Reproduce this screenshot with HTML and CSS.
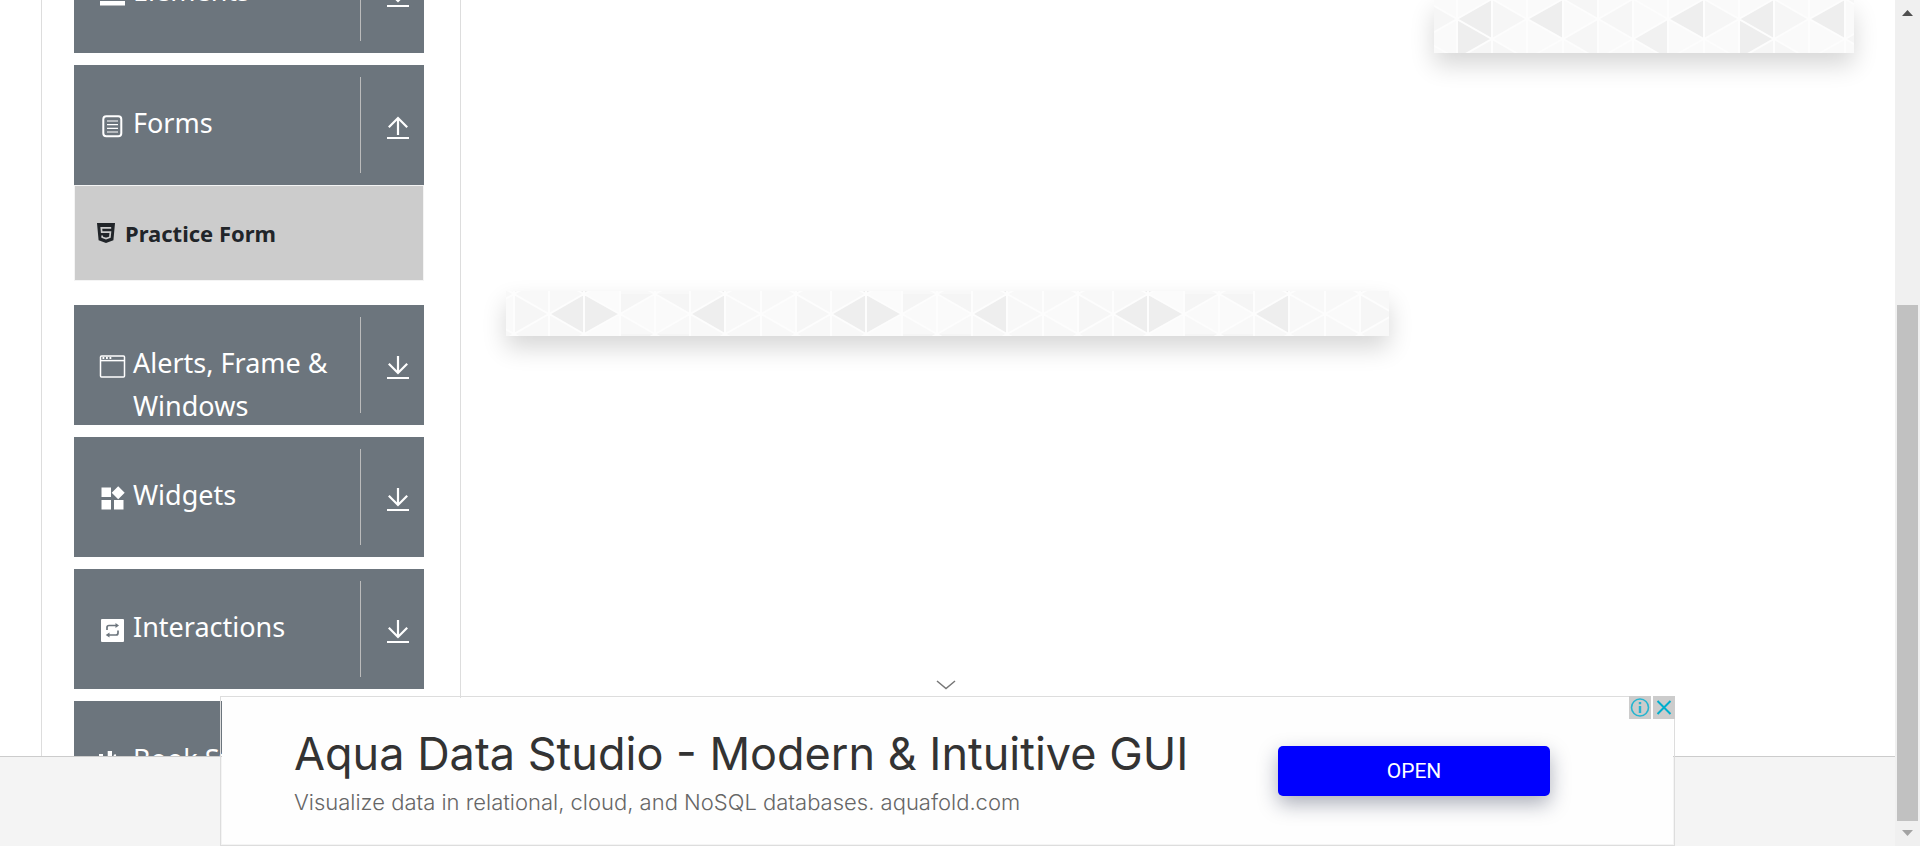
FILE: index.html
```html
<!DOCTYPE html>
<html lang="en">
<head>
<meta charset="utf-8">
<title>Practice Form</title>
<link rel="stylesheet" href="styles.css">
</head>
<body>
<svg class="defs" aria-hidden="true">
  <defs>
    <g id="arrow-down" fill="none" stroke="#fff" stroke-width="2.200"><path d="M14 4v17M4.800 11.800 14 21l9.200-9.200M3 26h22"/></g>
    <g id="arrow-up" fill="none" stroke="#fff" stroke-width="2.200"><path d="M14 23V6M4.800 15.200 14 6l9.200 9.200M3 26h22"/></g>
  </defs>
</svg>
<div class="window">
  <div class="page">
    <main class="main">
      <nav class="sidebar">
        <button class="card" type="button">
          <svg class="icon" viewBox="0 0 28 28"><path fill="#fff" d="M2 4h25v4H2zM2 12.500h25v4H2zM2 21h25v4.500H2z"/></svg>
          <span class="label">Elements</span>
          <span class="toggle"><svg class="icon" viewBox="0 0 28 28"><use href="#arrow-down"/></svg></span>
        </button>
        <div class="group">
          <button class="card" type="button">
            <svg class="icon" viewBox="0 0 28 28"><g fill="none" stroke="#fff"><rect x="5.300" y="4.300" width="18" height="20" rx="3" stroke-width="2"/><path stroke-width="1.200" d="M9 9h11M9 12.700h11M9 16.300h11M9 20h11"/></g></svg>
            <span class="label">Forms</span>
            <span class="toggle"><svg class="icon" viewBox="0 0 28 28"><use href="#arrow-up"/></svg></span>
          </button>
          <a class="subitem" href="#practice-form">
            <svg class="html5" viewBox="0 0 18 20"><path fill="#212529" d="M0 0h18l-1.600 17.200L9 20l-7.400-2.800z"/><path fill="none" stroke="#ccc" stroke-width="1.700" d="M14.200 4.800H4.300l.4 4.400h8.700l-.5 5-3.900 1.300-3.800-1.300-.1-1.700"/></svg>
            <span>Practice Form</span>
          </a>
        </div>
        <button class="card" type="button">
          <svg class="icon" viewBox="0 0 28 28"><g fill="none" stroke="#fff" stroke-width="1.500"><rect x="2.500" y="4" width="24" height="21" rx="1"/><path d="M2.500 8.600h24"/><path stroke-width="2" stroke-dasharray="1.800 1.700" d="M4.500 6h10"/></g></svg>
          <span class="label">Alerts, Frame &amp; Windows</span>
          <span class="toggle"><svg class="icon" viewBox="0 0 28 28"><use href="#arrow-down"/></svg></span>
        </button>
        <button class="card" type="button">
          <svg class="icon" viewBox="0 0 28 28"><path fill="#fff" d="M3.500 3.500H13V13H3.500zM3.500 16H13v9.500H3.500zM16 16h9.500v9.500H16zM20.200 2.200l6.500 6.500-6.500 6.500-6.500-6.500z"/></svg>
          <span class="label">Widgets</span>
          <span class="toggle"><svg class="icon" viewBox="0 0 28 28"><use href="#arrow-down"/></svg></span>
        </button>
        <button class="card" type="button">
          <svg class="icon" viewBox="0 0 28 28"><rect x="3" y="3" width="23" height="23" rx="1" fill="#fff"/><g fill="none" stroke="#6c757d" stroke-width="1.700"><path d="M9 14v-2.500q0-2 2-2h7M20 14.500V17q0 2-2 2h-7"/></g><path fill="#6c757d" d="M17.500 7v5l3.500-2.500zM11.500 16.500v5L7.700 19z"/></svg>
          <span class="label">Interactions</span>
          <span class="toggle"><svg class="icon" viewBox="0 0 28 28"><use href="#arrow-down"/></svg></span>
        </button>
        <button class="card" type="button">
          <svg class="icon" viewBox="0 0 28 28"><path fill="#fff" d="M1 6h4v19H1zM9.700 3h4.300v22H9.700zM15.500 7l2-1 7 18-3 1z"/></svg>
          <span class="label">Book Store Application</span>
          <span class="toggle"><svg class="icon" viewBox="0 0 28 28"><use href="#arrow-down"/></svg></span>
        </button>
      </nav>
      <section class="content">
        <div class="strip">
          <svg class="pattern" aria-hidden="true">
            <defs><pattern id="tri-strip" x="8" y="3" width="282" height="40" patternUnits="userSpaceOnUse">
              <rect width="282" height="40" fill="#f8f8f8"/>
              <path fill="#fbfbfb" d="M70 0h36v40H70z"/><path fill="#f5f5f5" d="M106 0h70v20h-70z"/>
              <path fill="#f6f6f6" d="M0 0 35 20 0 40z"/><path fill="#eee" d="M35 20 70 0v40zM70 0l36 20-36 20zM176 20l35-20v40z"/>
              <path fill="#fafafa" d="M106 20l35-20 35 20-35 20zM247 20l35-20v40z"/><path fill="#f8f8f8" d="M211 0l36 20-36 20z"/>
              <path fill="none" stroke="#fdfdfd" stroke-width="2" d="M0 0v40M35 0v40M70 0v40M106 0v40M141 0v40M176 0v40M211 0v40M247 0v40M282 0v40M0 0l35 20L70 0l36 20 35-20 35 20 35-20 36 20 35-20M0 40l35-20 35 20 36-20 35 20 35-20 35 20 36-20 35 20"/>
            </pattern></defs>
            <rect width="100%" height="100%" fill="url(#tri-strip)"/>
          </svg>
        </div>
      </section>
      <aside class="aside">
        <div class="tile">
          <svg class="pattern" aria-hidden="true">
            <defs><pattern id="tri-tile" x="23" y="-1" width="282" height="80" patternUnits="userSpaceOnUse">
              <rect width="282" height="80" fill="#fafafa"/>
              <path fill="#eee" d="M0 20 35 0v40zM0 20l35 20L0 60zM70 20l36-20v40zM211 20l36-20v40z"/>
              <path fill="#f1f1f1" d="M176 40l35-20v40z"/>
              <path fill="#f6f6f6" d="M35 0l35 20-35 20zM106 40l35-20v40zM141 20l35-20v40zM35 40 0 60h70zM106 0l35 20V0zM247 0l35 20-35 20z"/>
              <path fill="none" stroke="#fdfdfd" stroke-width="2" d="M0 0v80M35 0v80M70 0v80M106 0v80M141 0v80M176 0v80M211 0v80M247 0v80M282 0v80M0 20 35 0l35 20 36-20 35 20 35-20 35 20 36-20 35 20M0 20l35 20 35-20 36 20 35-20 35 20 35-20 36 20 35-20M0 60l35-20 35 20 36-20 35 20 35-20 35 20 36-20 35 20"/>
            </pattern></defs>
            <rect width="100%" height="100%" fill="url(#tri-tile)"/>
          </svg>
        </div>
      </aside>
    </main>
    <footer class="footer"></footer>
    <div class="dock">
      <button class="collapse" type="button" aria-label="Collapse"><svg class="chevron" viewBox="0 0 20 10"><path fill="none" stroke="#777" stroke-width="1.500" d="M1 1l9 7.500L19 1"/></svg></button>
      <div class="ad">
        <div class="ad-body">
          <div class="ad-text">
            <a class="ad-title" href="#ad">Aqua Data Studio - Modern &amp; Intuitive GUI</a>
            <a class="ad-sub" href="#ad">Visualize data in relational, cloud, and NoSQL databases. aquafold.com</a>
          </div>
          <button class="open" type="button">OPEN</button>
        </div>
        <div class="badges">
          <button class="badge" type="button" aria-label="Ad info"><svg viewBox="0 0 22 23"><g fill="none" stroke="#26b5d0"><circle cx="11" cy="11.500" r="8.500" stroke-width="1.600"/><path stroke-width="2.400" d="M11 10v7M11 6v2.300"/></g></svg></button>
          <button class="badge" type="button" aria-label="Close ad"><svg viewBox="0 0 22 23"><path fill="none" stroke="#00aecd" stroke-width="2" d="M4.500 5 17.500 18M17.500 5 4.500 18"/></svg></button>
        </div>
      </div>
    </div>
  </div>
  <div class="scrollbar" aria-hidden="true">
    <svg class="scroll-arrow" viewBox="0 0 25 25"><path fill="#505050" d="M7 16l5.500-6 5.500 6z"/></svg>
    <div class="track"><div class="thumb"></div></div>
    <svg class="scroll-arrow" viewBox="0 0 25 25"><path fill="#a3a3a3" d="M7 9h11l-5.500 6z"/></svg>
  </div>
</div>
</body>
</html>
```
FILE: styles.css
```css
* { box-sizing: border-box; }
body { margin: 0; font-family: "Noto Sans", "Open Sans", sans-serif; color: #212529; background: #fff; }
button { font: inherit; border: 0; padding: 0; cursor: pointer; }
a { color: inherit; text-decoration: none; }
svg { display: block; }
.defs { position: absolute; width: 0; height: 0; }

.window { display: flex; height: 100vh; overflow: hidden; }
.page { position: relative; flex: 1; display: flex; flex-direction: column; min-width: 0; }
.main { flex: 1; min-height: 0; overflow: hidden; display: flex; gap: 45px; padding: 0 41px; }
.footer { height: 90px; background: #f4f4f4; border-top: 1px solid #ccc; }

.sidebar {
  flex: none; width: 420px; height: max-content; margin-top: -67px; padding: 0 36px 0 32px;
  display: flex; flex-direction: column; gap: 12px;
  border: solid #ddd; border-width: 0 1px;
}
.card {
  display: flex; align-items: flex-start; width: 100%; height: 120px; overflow: hidden;
  padding-left: 24px; background: #6c757d; color: #fff; text-align: left;
}
.icon { flex: none; width: 28px; height: 28px; margin-top: 47px; }
.label { flex: 1; padding: 36px 0 0 7px; font-size: 27px; line-height: 43px; }
.toggle { flex: none; width: 64px; height: 96px; margin-top: 12px; padding-left: 23px; border-left: 1px solid #bbb; }
.toggle .icon { margin-top: 35px; }
.group { padding-bottom: 12px; }
.subitem {
  display: flex; align-items: center; gap: 10px; height: 96px; padding-left: 22px;
  border: 1px solid #f4f4f4; background: #ccc; font-size: 22px; font-weight: 700;
}
.html5 { width: 18px; height: 20px; }

.content { flex: 1; min-width: 0; padding-top: 291px; }
.strip { height: 45px; }
.aside { flex: none; width: 420px; }
.tile { height: 53px; }
.strip, .tile { box-shadow: 0 12px 24px rgba(0, 0, 0, .16); }
.pattern { width: 100%; height: 100%; }

.dock { position: absolute; left: 220px; right: 220px; bottom: 0; display: flex; flex-direction: column; align-items: center; }
.collapse { padding: 0 12px 6px 8px; background: none; }
.chevron { width: 20px; height: 10px; }
.ad { position: relative; width: 100%; height: 150px; padding: 1px; border: 1px solid #ddd; }
.ad-body { display: flex; align-items: center; justify-content: space-between; height: 100%; padding: 0 123px 0 72px; background: #fefefe; }
.ad-text { display: flex; flex-direction: column; gap: 6px; font-family: Inter, sans-serif; white-space: nowrap; }
.ad-title { font-size: 45px; line-height: 56px; font-weight: 400; color: #333; }
.ad-sub { font-size: 22px; line-height: 28px; font-weight: 300; color: #666; }
.open {
  width: 272px; height: 50px; border-radius: 5px; background: #00f; color: #fff;
  font-family: Roboto, sans-serif; font-size: 21px;
  box-shadow: 0 8px 20px rgba(20, 30, 60, .35);
}
.badges { position: absolute; top: -1px; right: -1px; display: flex; gap: 2px; background: #fff; }
.badge { width: 22px; height: 23px; background: #ccc; }

.scrollbar { flex: none; width: 25px; display: flex; flex-direction: column; background: #f0f0f0; }
.scroll-arrow { width: 25px; height: 25px; }
.track { flex: 1; padding: 280px 2px 0; }
.thumb { height: 100%; background: #c1c1c1; }
```
